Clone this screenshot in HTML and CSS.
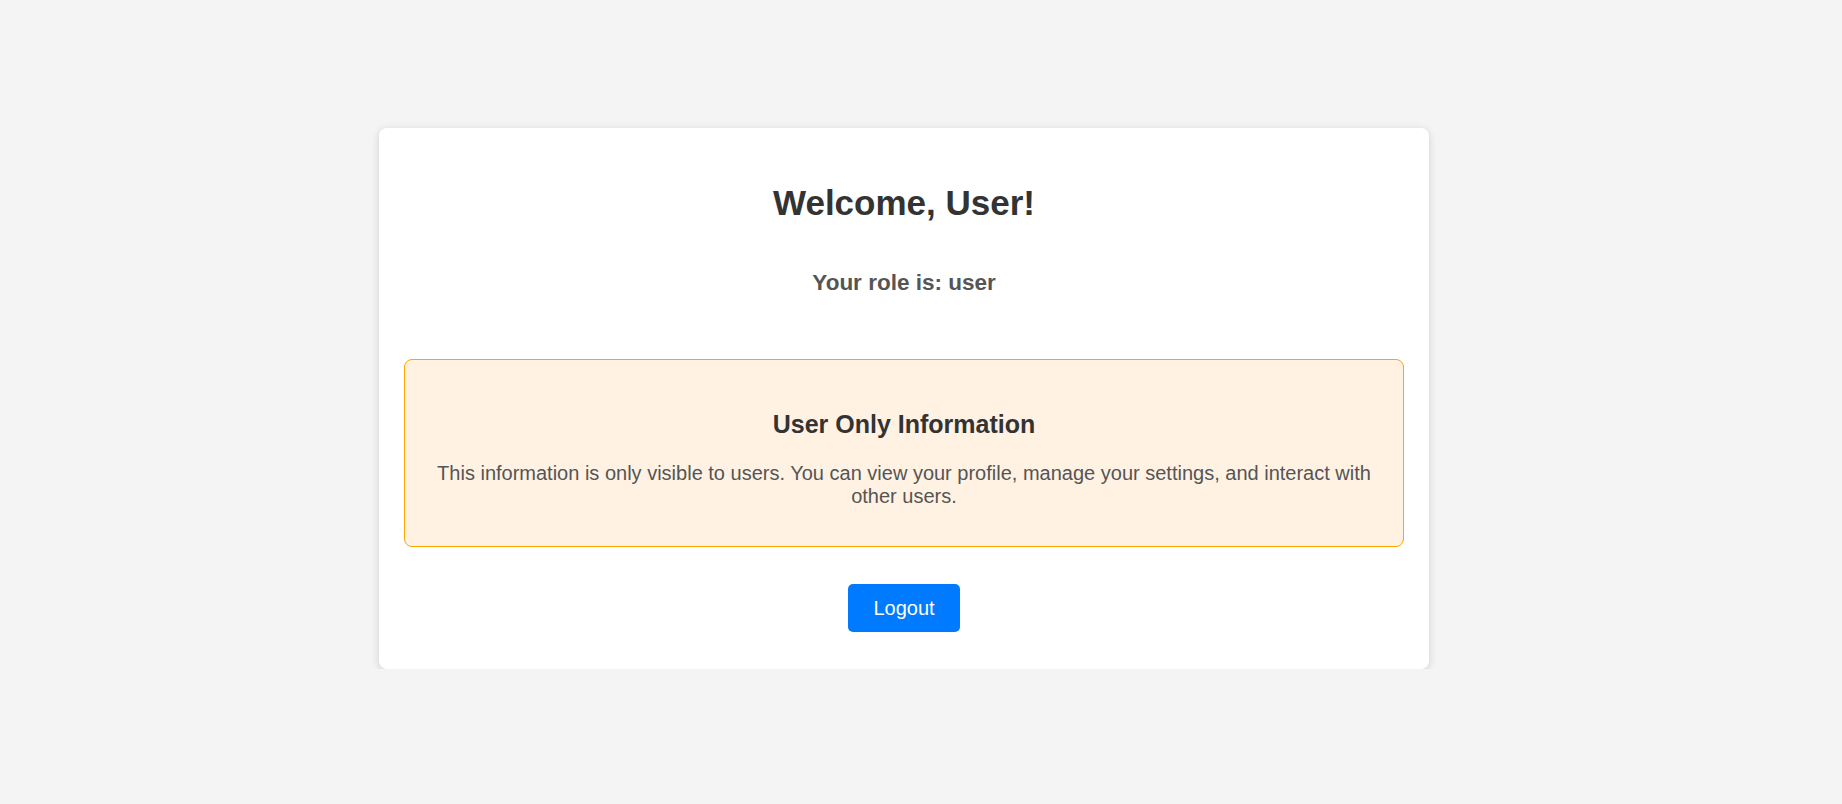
FILE: index.html
```html
<!DOCTYPE html>
<html lang="en">
<head>
<meta charset="utf-8">
<title>Dashboard</title>
<link rel="stylesheet" href="styles.css">
</head>
<body>
  <div class="page">
    <main class="card">
      <h1 class="title">Welcome, User!</h1>
      <h2 class="role">Your role is: user</h2>
      <section class="info-box">
        <h3 class="info-title">User Only Information</h3>
        <p class="info-text">This information is only visible to users. You can view your profile, manage your settings, and interact with other users.</p>
      </section>
      <div class="actions">
        <button class="logout" type="button">Logout</button>
      </div>
    </main>
  </div>
</body>
</html>
```

FILE: styles.css
```css
html, body {
  margin: 0;
  padding: 0;
}

body {
  background: #f4f4f4;
  font-family: "Liberation Sans", Arial, sans-serif;
  color: #333;
}

.page {
  padding: 128px 0 0 379px;
}

.card {
  width: 1050px;
  box-sizing: border-box;
  background: #fff;
  border-radius: 8px;
  box-shadow: 0 2px 8px rgba(0, 0, 0, 0.15);
  padding: 25px 25px 37px;
  text-align: center;
}

.title {
  margin: 30px 0 0;
  font-size: 35px;
  font-weight: bold;
  color: #333;
}

.role {
  margin: 47px 0 0;
  font-size: 22.5px;
  font-weight: bold;
  color: #555;
}

.info-box {
  margin-top: 63px;
  background: #fff2e3;
  border: 1px solid #ffa500;
  border-radius: 8px;
  padding: 50px 25px 38px;
}

.info-title {
  margin: 0;
  font-size: 25px;
  font-weight: bold;
  color: #333;
}

.info-text {
  margin: 23px 0 0;
  font-size: 20px;
  color: #555;
}

.actions {
  margin-top: 37px;
}

.logout {
  height: 48px;
  padding: 0 25px;
  border: none;
  border-radius: 5px;
  background: #007bff;
  color: #fff;
  font-family: "Liberation Sans", Arial, sans-serif;
  font-size: 20px;
  cursor: pointer;
}
```
